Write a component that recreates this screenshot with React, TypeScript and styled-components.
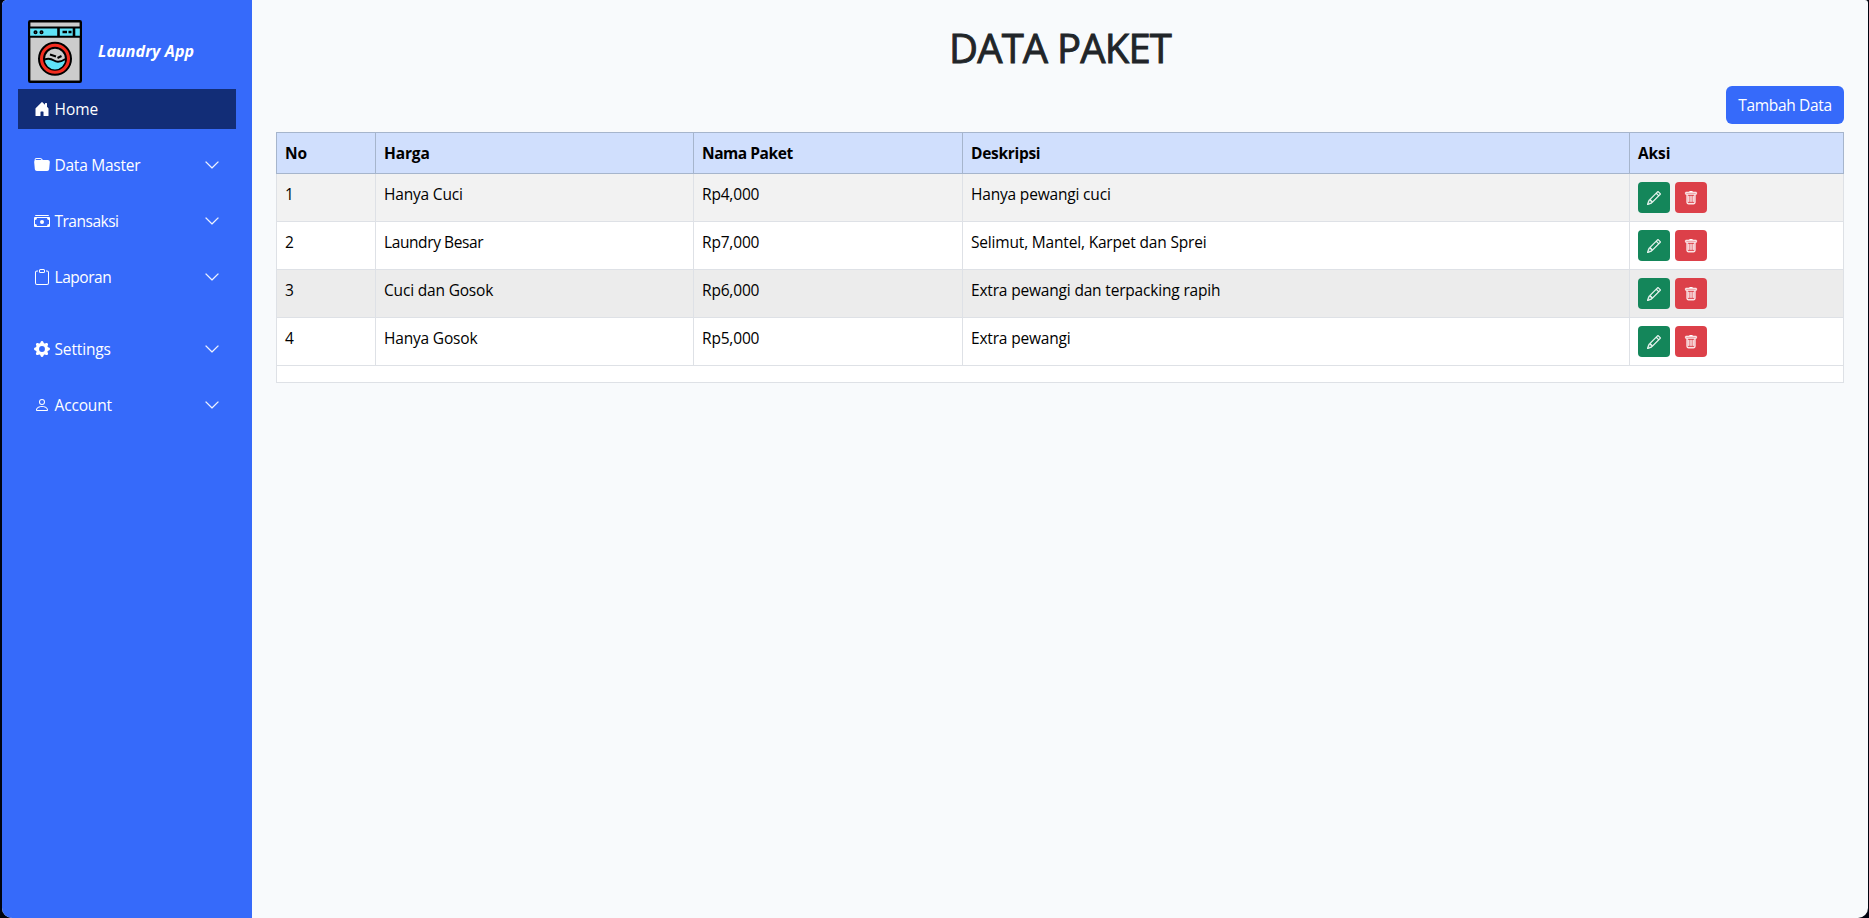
import React from "react";
import styled, { createGlobalStyle } from "styled-components";
import {
  BsHouseDoorFill, BsFolderFill, BsCashStack, BsClipboard, BsGearFill,
  BsPerson, BsChevronDown, BsPencil, BsTrash,
} from "react-icons/bs";

const GlobalStyle = createGlobalStyle`
  *, *::before, *::after { box-sizing: border-box; }
  html, body { margin: 0; height: 100%; background: #00030f; overflow: hidden; }
  body { font: 400 15.5px/24px "Open Sans", "Noto Sans", sans-serif; color: #000; }
`;

const Frame = styled.div`
  display: flex;
  height: 918px;
  margin: 0 1px 0 2px;
  background: #f8fafc;
  border-radius: 5px 3px 10px 10px;
  overflow: hidden;
`;

const Sidebar = styled.aside`
  flex: 0 0 250px;
  padding: 16px;
  background: #366afa;
`;

const Brand = styled.div`
  display: flex;
  align-items: center;
  height: 73px;
  padding-left: 10px;
  color: #fff;
`;

const BrandName = styled.span`
  margin: -4px 0 0 16px;
  font-size: 16px;
  font-weight: 700;
  font-style: italic;
  letter-spacing: 0.12px;
`;

const WasherArt = styled.svg`
  display: block;
  margin-top: -2px;
`;

const Menu = styled.nav`
  display: flex;
  flex-direction: column;
  gap: 16px;
`;

const MenuItem = styled.a<{ $active?: boolean; $spaced?: boolean }>`
  display: flex;
  align-items: center;
  height: 40px;
  margin-top: ${(p) => (p.$spaced ? 16 : 0)}px;
  padding: 0 16px;
  color: #fff;
  background: ${(p) => (p.$active ? "#122d77" : "transparent")};
`;

const MenuLabel = styled.span<{ $spacing: number }>`
  flex: 1;
  margin-left: 4.5px;
  letter-spacing: ${(p) => p.$spacing}px;
`;

const Chevron = styled(BsChevronDown)`
  stroke: #fff;
  stroke-width: 0.3px;
`;

const Main = styled.main`
  flex: 1;
  min-width: 0;
  padding: 24px 24px 0;
`;

const Title = styled.h1`
  margin: 0 0 14px;
  font-size: 40px;
  line-height: 48px;
  font-weight: 500;
  text-align: center;
  color: #212529;
  letter-spacing: -0.8px;
  -webkit-text-stroke: 0.9px #212529;
`;

const Toolbar = styled.div`
  display: flex;
  justify-content: flex-end;
  margin-bottom: 8px;
`;

const AddButton = styled.button`
  width: 118px;
  height: 38px;
  padding: 0;
  border: 0;
  border-radius: 6px;
  background: #366afa;
  color: #fff;
  font: inherit;
  letter-spacing: -0.33px;
  white-space: nowrap;
`;

const Table = styled.table`
  width: 1568px;
  table-layout: fixed;
  border-collapse: collapse;
`;

const HeadCell = styled.th<{ $spacing: number }>`
  height: 41px;
  padding: 0 8px;
  border: 1px solid #a6b5cc;
  background: #d0dffd;
  text-align: left;
  font-weight: 700;
  letter-spacing: ${(p) => p.$spacing}px;
`;

const Row = styled.tr<{ $fill: string }>`
  background: ${(p) => p.$fill};
`;

const Cell = styled.td<{ $spacing?: number }>`
  height: 48px;
  padding: 8px;
  border: 1px solid #dee1e6;
  vertical-align: top;
  white-space: nowrap;
  letter-spacing: ${(p) => p.$spacing ?? -0.18}px;
`;

const FooterCell = styled.td`
  height: 17px;
  padding: 0;
  border: 1px solid #dee1e6;
  background: #fff;
`;

const Actions = styled.div`
  display: flex;
  gap: 5px;
`;

const IconButton = styled.button<{ $color: string }>`
  display: flex;
  align-items: center;
  justify-content: center;
  width: 32px;
  height: 31px;
  padding: 0;
  border: 0;
  border-radius: 4px;
  background: ${(p) => p.$color};
  color: #fff;

  svg {
    stroke: #fff;
    stroke-width: 0.45px;
  }
`;

function Washer() {
  return (
    <WasherArt width="54" height="63" viewBox="0 0 54 63" stroke="#000" strokeWidth="2">
      <rect x="1.200" y="1.200" width="51.600" height="60.600" rx="1" fill="#ccc" strokeWidth="2.4" />
      <rect x="2.400" y="8" width="49.200" height="8" fill="#5fe3f7" stroke="none" />
      <path d="M30.500 7v9M46 7v9" strokeWidth="2.6" />
      <path d="M2 7.500h50M2 16.800h50" strokeWidth="2" />
      <circle cx="7.500" cy="12.200" r="1.300" fill="#456" strokeWidth="1.500" />
      <circle cx="13.500" cy="12.200" r="1.300" fill="#456" strokeWidth="1.500" />
      <path d="M34.500 12h4.500M40.500 12h3" strokeWidth="2.400" />
      <circle cx="27" cy="38.800" r="16" fill="#f32d20" />
      <circle cx="27" cy="38.800" r="11" fill="#ccc" />
      <path d="M17 39.500q5-2 9 1t11-1a10 10 0 0 1-20 0z" fill="#5fe3f7" stroke="none" />
      <path d="M16.500 39.500q5-2 9.500 1t11.500-1.500M22 34.500l6 2M29.500 38l4-2" fill="none" />
    </WasherArt>
  );
}

const menu = [
  { label: "Home", Icon: BsHouseDoorFill, active: true, spacing: 0 },
  { label: "Data Master", Icon: BsFolderFill, spacing: -0.25 },
  { label: "Transaksi", Icon: BsCashStack, spacing: -0.5 },
  { label: "Laporan", Icon: BsClipboard, spacing: -0.45 },
  { label: "Settings", Icon: BsGearFill, spaced: true, spacing: -0.15 },
  { label: "Account", Icon: BsPerson, spacing: -0.15 },
];

const columns = [
  { label: "No", width: 99, spacing: 0 },
  { label: "Harga", width: 318, spacing: -0.15 },
  { label: "Nama Paket", width: 269, spacing: -0.45 },
  { label: "Deskripsi", width: 667, spacing: -0.3 },
  { label: "Aksi", width: 214, spacing: -0.1 },
];

const rows = [
  { harga: "Hanya Cuci", paket: "Rp4,000", deskripsi: "Hanya pewangi cuci", fill: "#f2f2f2" },
  { harga: "Laundry Besar", hargaSpacing: -0.4, paket: "Rp7,000", deskripsi: "Selimut, Mantel, Karpet dan Sprei", fill: "#fff" },
  { harga: "Cuci dan Gosok", paket: "Rp6,000", deskripsi: "Extra pewangi dan terpacking rapih", fill: "#ececec" },
  { harga: "Hanya Gosok", paket: "Rp5,000", deskripsi: "Extra pewangi", fill: "#fff" },
];

export default function App() {
  return (
    <>
      <GlobalStyle />
      <Frame>
        <Sidebar>
          <Brand>
            <Washer />
            <BrandName>Laundry App</BrandName>
          </Brand>
          <Menu>
            {menu.map(({ label, Icon, active, spaced, spacing }) => (
              <MenuItem key={label} $active={active} $spaced={spaced}>
                <Icon size={16} />
                <MenuLabel $spacing={spacing}>{label}</MenuLabel>
                {!active && <Chevron size={16} />}
              </MenuItem>
            ))}
          </Menu>
        </Sidebar>
        <Main>
          <Title>DATA PAKET</Title>
          <Toolbar>
            <AddButton>Tambah Data</AddButton>
          </Toolbar>
          <Table>
            <colgroup>
              {columns.map((c) => <col key={c.label} width={c.width} />)}
            </colgroup>
            <thead>
              <tr>
                {columns.map((c) => <HeadCell key={c.label} $spacing={c.spacing}>{c.label}</HeadCell>)}
              </tr>
            </thead>
            <tbody>
              {rows.map((r, i) => (
                <Row key={r.harga} $fill={r.fill}>
                  <Cell>{i + 1}</Cell>
                  <Cell $spacing={r.hargaSpacing}>{r.harga}</Cell>
                  <Cell>{r.paket}</Cell>
                  <Cell>{r.deskripsi}</Cell>
                  <Cell>
                    <Actions>
                      <IconButton $color="#14865a" aria-label="Edit"><BsPencil size={14} /></IconButton>
                      <IconButton $color="#dc4049" aria-label="Hapus"><BsTrash size={14} /></IconButton>
                    </Actions>
                  </Cell>
                </Row>
              ))}
              <tr><FooterCell colSpan={5} /></tr>
            </tbody>
          </Table>
        </Main>
      </Frame>
    </>
  );
}
